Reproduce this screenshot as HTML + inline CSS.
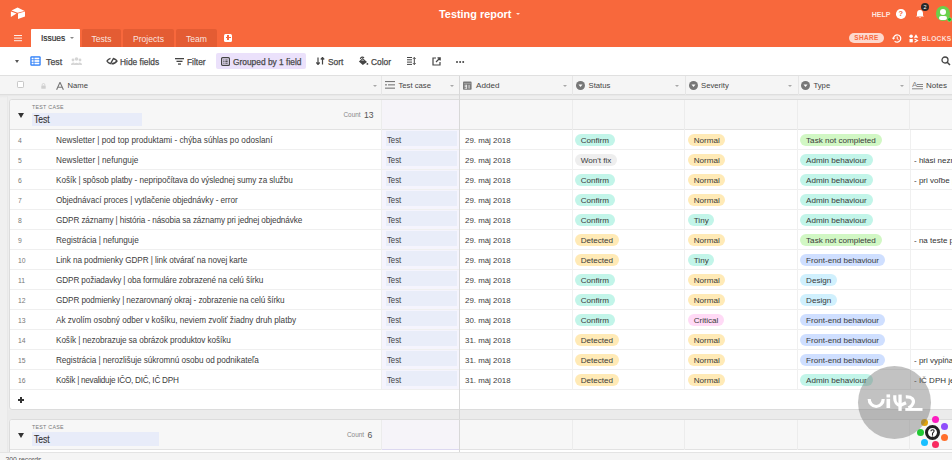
<!DOCTYPE html>
<html><head><meta charset="utf-8">
<style>
*{box-sizing:border-box;margin:0;padding:0}
html,body{width:952px;height:460px;overflow:hidden}
body{position:relative;background:#f0f0f0;font-family:"Liberation Sans",sans-serif;color:#333}
.a{position:absolute;white-space:nowrap}
#hdr{position:absolute;left:0;top:0;width:952px;height:47px;background:#f8683c}
.tab{position:absolute;top:29px;height:18px;padding-top:.5px;background:#e45c33;border-radius:2px 2px 0 0;color:rgba(255,255,255,.85);font-size:8.6px;line-height:18px;text-align:center}
#tb{position:absolute;left:0;top:47px;width:952px;height:29px;background:#fff;border-bottom:1px solid #e0e0e0}
.tt{position:absolute;top:1px;line-height:28px;font-size:8.4px;color:#4a4a4a;-webkit-text-stroke:.25px #4a4a4a}
#ch{position:absolute;left:0;top:76px;width:952px;height:19px;background:#f5f5f5;border-bottom:1px solid #dedede}
.hc{position:absolute;top:0;height:18px;line-height:20px;font-size:7.7px;color:#444}
.vd{position:absolute;width:1px;background:#e6e6e6}
.card{position:absolute;left:9px;width:960px;background:#fff;border:1px solid #dcdcdc;border-radius:3px}
.row{position:absolute;left:0;width:943px;height:20px;border-bottom:1px solid #efefef}
.num{position:absolute;white-space:nowrap;left:8px;top:1px;line-height:19px;font-size:6.8px;color:#777}
.nm{position:absolute;white-space:nowrap;left:46px;top:1px;line-height:19px;font-size:8.2px;color:#404040}
.tc{position:absolute;left:372px;top:0;width:78px;height:19px;background:#f5f4fd}
.tcp{position:absolute;left:3.8px;top:1px;width:71.2px;height:15px;background:#e9edf9}.tcp span{position:absolute;left:1.6px;top:0;font-size:9px;line-height:19.2px;color:#444;transform:scaleX(.86);transform-origin:0 0}
.dt{position:absolute;white-space:nowrap;left:455px;top:1px;line-height:19px;font-size:7.9px;color:#404040}
.pill{position:absolute;white-space:nowrap;top:3.8px;height:12px;line-height:13px;border-radius:6px;font-size:8.1px;padding:0 5.7px;color:#3a3a3a}
.nt{position:absolute;left:904px;top:1px;width:60px;overflow:hidden;white-space:nowrap;line-height:19px;font-size:8px;color:#333}
</style></head><body>

<!-- header -->
<div id="hdr">
  <svg class="a" style="left:10px;top:7px" width="16" height="13" viewBox="0 0 16 13">
    <path d="M1.5 3.6 L7.6 0.6 L14.6 4 L7.6 5.8 Z" fill="#fff"/>
    <path d="M0.9 4.6 L0.9 9.9 L6.5 6.5 Z" fill="#fff"/>
    <path d="M8 6.4 L15 4.5 L15 9.5 L8 12.1 Z" fill="#fff"/>
  </svg>
  <div class="a" style="left:439px;top:0;line-height:28px;font-size:10.9px;font-weight:bold;color:#fff">Testing report</div>
  <div class="a" style="left:516px;top:12.5px;width:0;height:0;border-left:2px solid transparent;border-right:2px solid transparent;border-top:2px solid rgba(255,255,255,.8)"></div>
  <div class="a" style="left:871.8px;top:.6px;line-height:28px;font-size:7px;font-weight:bold;letter-spacing:0;color:rgba(255,255,255,.85)">HELP</div>
  <div class="a" style="left:896px;top:9px;width:9.5px;height:9.5px;border-radius:50%;background:#fff;color:#f8683c;font-size:7.5px;font-weight:bold;line-height:9.5px;text-align:center">?</div>
  <svg class="a" style="left:915.4px;top:8.6px" width="10" height="10" viewBox="0 0 10 10"><path d="M5 1 C2.8 1 2 2.6 2 4.5 L2 6.5 L1 7.6 L9 7.6 L8 6.5 L8 4.5 C8 2.6 7.2 1 5 1Z M4 8.3 L6 8.3 L5 9.3Z" fill="#fff"/></svg>
  <div class="a" style="left:921.1px;top:3.2px;width:8px;height:8px;border-radius:50%;background:#2a2a2a;color:#fff;font-size:5.5px;line-height:8px;text-align:center">2</div>
  <div class="a" style="left:935.6px;top:5.9px;width:14.9px;height:14.9px;border-radius:50%;background:#6cd14b;overflow:hidden">
    <div class="a" style="left:4.4px;top:2.7px;width:6px;height:6px;border-radius:50%;background:#fff"></div>
    <div class="a" style="left:3.2px;top:10.2px;width:8px;height:3.6px;border-radius:2px;background:#fff"></div>
  </div>
  <div class="a" style="left:946.6px;top:16.8px;width:5px;height:5px;border-radius:50%;background:#14b825;border:.8px solid #7ad860"></div>

  <div class="a" style="left:14px;top:34.8px;width:7.8px;height:1.3px;background:#fff;box-shadow:0 2.6px 0 #fff,0 5.2px 0 #fff;opacity:.9"></div>
  <div class="a" style="left:30.6px;top:28.8px;width:49.4px;height:18.2px;background:#fff;border-radius:1px 1px 0 0"></div>
  <div class="a" style="left:41px;top:29px;line-height:18px;font-size:8.4px;color:#333;-webkit-text-stroke:.2px #333">Issues</div>
  <div class="a" style="left:70px;top:37px;width:0;height:0;border-left:2px solid transparent;border-right:2px solid transparent;border-top:2.5px solid #888"></div>
  <div class="tab" style="left:82px;width:39px">Tests</div>
  <div class="tab" style="left:123px;width:51px">Projects</div>
  <div class="tab" style="left:176px;width:41px">Team</div>
  <div class="a" style="left:224px;top:33.6px;width:8px;height:8px;border-radius:1.5px;background:#fff"></div>
  <div class="a" style="left:227.3px;top:35.1px;width:1.5px;height:5px;background:#f8683c"></div>
  <div class="a" style="left:225.5px;top:36.85px;width:5px;height:1.5px;background:#f8683c"></div>

  <div class="a" style="left:849px;top:33px;width:35px;height:10px;border-radius:5px;background:rgba(255,255,255,.75);color:#f8683c;font-size:6.4px;font-weight:bold;line-height:10px;text-align:center;letter-spacing:.4px">SHARE</div>
  <svg class="a" style="left:891px;top:34px" width="11" height="9" viewBox="0 0 11 9"><path d="M2.5 4.5 A3.6 3.6 0 1 1 3.6 7.1" fill="none" stroke="#fff" stroke-width="1.2"/><path d="M0.8 3.8 L4.2 3.8 L2.5 5.8Z" fill="#fff"/><path d="M6.2 2.6 L6.2 4.8 L7.6 5.8" fill="none" stroke="#fff" stroke-width="1"/></svg>
  <svg class="a" style="left:909px;top:34px" width="10" height="9" viewBox="0 0 10 9"><circle cx="2.15" cy="2.15" r="1.75" fill="#fff"/><path d="M7 0.3 L9.2 3.8 L4.8 3.8Z" fill="#fff"/><rect x="0.5" y="5" width="3.3" height="3.3" fill="#fff"/><path d="M5.5 5 L8.5 6.6 L5.5 8.3" fill="none" stroke="#fff" stroke-width="1.1"/></svg>
  <div class="a" style="left:921.8px;top:29px;line-height:19px;font-size:6.6px;font-weight:bold;letter-spacing:.3px;color:rgba(255,255,255,.82)">BLOCKS</div>
</div>

<!-- toolbar -->
<div id="tb">
  <div class="a" style="left:15.4px;top:12.6px;width:0;height:0;border-left:2.8px solid transparent;border-right:2.8px solid transparent;border-top:3.5px solid #555"></div>
  <svg class="a" style="left:30px;top:9px" width="11" height="10" viewBox="0 0 11 10"><rect x="0.3" y="0.3" width="10.4" height="9.4" rx="1.2" fill="#2d7ff9"/><g fill="#fff"><rect x="1.6" y="1.6" width="2" height="1.8"/><rect x="4.4" y="1.6" width="5" height="1.8"/><rect x="1.6" y="4.1" width="2" height="1.8"/><rect x="4.4" y="4.1" width="5" height="1.8"/><rect x="1.6" y="6.6" width="2" height="1.8"/><rect x="4.4" y="6.6" width="5" height="1.8"/></g></svg>
  <div class="tt" style="left:46px;font-size:8.8px;color:#4a4a4a">Test</div>
  <svg class="a" style="left:71px;top:10px" width="11" height="8" viewBox="0 0 11 8"><g fill="#d5d5d5"><circle cx="5.5" cy="2" r="1.8"/><circle cx="2" cy="3" r="1.4"/><circle cx="9" cy="3" r="1.4"/><path d="M2.6 8 C2.6 5 8.4 5 8.4 8Z"/><path d="M0 8 C0 5.5 3 5 3.5 6 L2.6 8Z"/><path d="M11 8 C11 5.5 8 5 7.5 6 L8.4 8Z"/></g></svg>

  <svg class="a" style="left:106px;top:10px" width="12" height="8" viewBox="0 0 12 8"><g fill="none" stroke="#444" stroke-width="1.4"><path d="M4.5 1.3 C2.8 1.8 1.5 3 1 4 C1.5 5 2.5 6 4 6.5"/><path d="M7.3 1.5 C9 2 10.5 3 11 4 C10 5.5 8 6.8 5.5 6.8"/><path d="M7.7 1 L4.3 7.2"/></g></svg>
  <div class="tt" style="left:120px">Hide fields</div>
  <svg class="a" style="left:175px;top:11px" width="9" height="7" viewBox="0 0 9 7"><rect x="0" y="0" width="9" height="1.3" fill="#444"/><rect x="1.5" y="2.7" width="6" height="1.3" fill="#444"/><rect x="3" y="5.4" width="3" height="1.3" fill="#444"/></svg>
  <div class="tt" style="left:187px">Filter</div>
  <div class="a" style="left:215.5px;top:6px;width:90px;height:16px;border-radius:2px;background:#ebe1fb"></div>
  <svg class="a" style="left:221px;top:9.5px" width="9" height="9" viewBox="0 0 9 9"><rect x="0.6" y="0.6" width="7.8" height="7.8" rx="1" fill="none" stroke="#444" stroke-width="1.2"/><rect x="2.3" y="2.5" width="1.2" height="1" fill="#444"/><rect x="4.3" y="2.5" width="2.4" height="1" fill="#444"/><rect x="2.3" y="4.1" width="1.2" height="1" fill="#444"/><rect x="4.3" y="4.1" width="2.4" height="1" fill="#444"/><rect x="2.3" y="5.7" width="1.2" height="1" fill="#444"/><rect x="4.3" y="5.7" width="2.4" height="1" fill="#444"/></svg>
  <div class="tt" style="left:233px">Grouped by 1 field</div>
  <svg class="a" style="left:316px;top:10px" width="9" height="8" viewBox="0 0 9 8"><path d="M2 0.5 L2 7.5 M0.3 5.5 L2 7.5 L3.7 5.5" fill="none" stroke="#444" stroke-width="1.2"/><path d="M6.5 7.5 L6.5 0.5 M4.8 2.5 L6.5 0.5 L8.2 2.5" fill="none" stroke="#444" stroke-width="1.2"/></svg>
  <div class="tt" style="left:328px">Sort</div>
  <svg class="a" style="left:358px;top:9px" width="11" height="10" viewBox="0 0 11 10"><path d="M2.3 2.8 C2.8 0.8 5 0.6 6 2" fill="none" stroke="#444" stroke-width="1.1"/><path d="M4.6 2.1 L9 5.9 L4.8 9 L0.9 5.4 Z" fill="#444"/><path d="M3 4.4 L4.6 3.4 L6.4 4.5 Z" fill="#eee"/><circle cx="9.4" cy="7.9" r=".9" fill="#444"/></svg>
  <div class="tt" style="left:371px">Color</div>
  <svg class="a" style="left:407px;top:10px" width="9" height="8" viewBox="0 0 9 8"><g fill="#444"><rect x="0" y="0" width="5" height="1"/><rect x="0" y="2.3" width="5" height="1"/><rect x="0" y="4.6" width="5" height="1"/><rect x="0" y="6.9" width="5" height="1"/></g><path d="M7.3 0.5 L7.3 7.5 M6 1.8 L7.3 0.5 L8.6 1.8 M6 6.2 L7.3 7.5 L8.6 6.2" fill="none" stroke="#444" stroke-width="1"/></svg>
  <svg class="a" style="left:431.5px;top:10px" width="9" height="9" viewBox="0 0 9 9"><path d="M4 1 L1 1 L1 8 L8 8 L8 5" fill="none" stroke="#444" stroke-width="1.2"/><path d="M4 5 L8 1 M5.5 0.8 L8.2 0.8 L8.2 3.5" fill="none" stroke="#444" stroke-width="1.2"/></svg>
  <div class="a" style="left:455.6px;top:14px;width:2px;height:2px;background:#444;border-radius:50%;box-shadow:3.1px 0 0 #444,6.2px 0 0 #444"></div>
  <svg class="a" style="left:941px;top:9px" width="10" height="10" viewBox="0 0 10 10"><circle cx="4" cy="4" r="3" fill="none" stroke="#444" stroke-width="1.3"/><path d="M6.2 6.2 L9 9" stroke="#444" stroke-width="1.5"/></svg>
</div>

<!-- column headers -->
<div id="ch">
  <div class="a" style="left:16.8px;top:5.3px;width:7.1px;height:6.9px;border:1px solid #c8c8c8;border-radius:1.2px;background:#fff"></div>
  <svg class="a" style="left:40.5px;top:7.4px" width="5" height="6" viewBox="0 0 5 6"><path d="M1.2 2.6 L1.2 1.8 A1.3 1.3 0 0 1 3.8 1.8 L3.8 2.6" fill="none" stroke="#cfcfcf" stroke-width=".8"/><rect x="0.3" y="2.5" width="4.4" height="3.2" rx=".5" fill="#cfcfcf"/></svg>
  <svg class="a" style="left:56px;top:5.6px" width="8" height="8" viewBox="0 0 8 8"><path d="M0.6 7.8 L4 0.3 L7.4 7.8 M1.9 5.2 L6.1 5.2" fill="none" stroke="#777" stroke-width="1.1"/></svg>
  <div class="hc" style="left:67.5px">Name</div>
  <div class="a" style="left:373px;top:8.6px;border-left:2px solid transparent;border-right:2px solid transparent;border-top:2.6px solid #a8a8a8"></div>
  <div class="vd" style="left:381px;top:0;height:19px"></div>
  <svg class="a" style="left:385px;top:5.3px" width="10" height="8" viewBox="0 0 10 8"><g fill="#777"><rect x="0" y="0" width="10" height="1.1"/><rect x="3" y="3.3" width="7" height="1.1"/><rect x="0" y="6.6" width="10" height="1.1"/><rect x="0" y="3.3" width="2" height="1.1"/></g></svg>
  <div class="hc" style="left:398.5px">Test case</div>
  <div class="a" style="left:450px;top:8.6px;border-left:2px solid transparent;border-right:2px solid transparent;border-top:2.6px solid #a8a8a8"></div>
  <div class="vd" style="left:459px;top:0;height:19px;background:#d8d8d8"></div>
  <svg class="a" style="left:463.4px;top:4.6px" width="9" height="9" viewBox="0 0 9 9"><rect x="0" y="0.6" width="8.6" height="8.2" rx=".8" fill="#7a7a7a"/><rect x="0.9" y="2.2" width="6.8" height=".7" fill="#aaa"/><g fill="#f0f0f0"><rect x="1.6" y="3.8" width="2.4" height=".8"/><rect x="1.6" y="5.3" width="2.4" height=".8"/><rect x="1.6" y="6.8" width="2.4" height=".8"/><rect x="3.3" y="3.8" width=".8" height="3.8"/><rect x="5.6" y="3.8" width=".9" height="3.8"/></g></svg>
  <div class="hc" style="left:476px;font-size:8.1px">Added</div>
  <div class="a" style="left:562.5px;top:8.6px;border-left:2px solid transparent;border-right:2px solid transparent;border-top:2.6px solid #a8a8a8"></div>
  <div class="vd" style="left:572px;top:0;height:19px"></div>
  <svg class="a" style="left:575.5px;top:4.7px" width="9" height="9" viewBox="0 0 9 9"><circle cx="4.5" cy="4.5" r="4.5" fill="#777"/><path d="M2.5 3.5 L6.5 3.5 L4.5 6Z" fill="#fff"/></svg>
  <div class="hc" style="left:588.5px">Status</div>
  <div class="a" style="left:675px;top:8.6px;border-left:2px solid transparent;border-right:2px solid transparent;border-top:2.6px solid #a8a8a8"></div>
  <div class="vd" style="left:685px;top:0;height:19px"></div>
  <svg class="a" style="left:688.5px;top:4.7px" width="9" height="9" viewBox="0 0 9 9"><circle cx="4.5" cy="4.5" r="4.5" fill="#777"/><path d="M2.5 3.5 L6.5 3.5 L4.5 6Z" fill="#fff"/></svg>
  <div class="hc" style="left:701px">Severity</div>
  <div class="a" style="left:787.5px;top:8.6px;border-left:2px solid transparent;border-right:2px solid transparent;border-top:2.6px solid #a8a8a8"></div>
  <div class="vd" style="left:797.5px;top:0;height:19px"></div>
  <svg class="a" style="left:801px;top:4.7px" width="9" height="9" viewBox="0 0 9 9"><circle cx="4.5" cy="4.5" r="4.5" fill="#777"/><path d="M2.5 3.5 L6.5 3.5 L4.5 6Z" fill="#fff"/></svg>
  <div class="hc" style="left:813.5px">Type</div>
  <div class="a" style="left:900px;top:8.6px;border-left:2px solid transparent;border-right:2px solid transparent;border-top:2.6px solid #a8a8a8"></div>
  <div class="vd" style="left:909px;top:0;height:19px"></div>
  <svg class="a" style="left:912px;top:4.2px" width="11" height="10" viewBox="0 0 11 10"><text x="0" y="7" font-size="8" font-family="Liberation Sans" fill="#888">A</text><g fill="#888"><rect x="5" y="4" width="6" height="1"/><rect x="5" y="6" width="6" height="1"/><rect x="0" y="8.3" width="11" height="1"/></g></svg>
  <div class="hc" style="left:926px;font-size:8px">Notes</div>
</div>

<div class="a" style="left:0;top:95px;width:952px;height:3px;background:linear-gradient(#e6e6e6,#f0f0f0)"></div>
<div class="a" style="left:7px;top:96px;width:945px;height:364px;border-left:1px solid #e9e9e9;background:#eeeeee"></div>
<div class="a" style="left:8px;top:410px;width:944px;height:10px;background:#ebebeb"></div>
<div class="card" style="top:99px;height:311px;overflow:hidden">
<div class="a" style="left:0;top:0;width:960px;height:30px;background:#f7f7f7;border-bottom:1px solid #e2e2e2"></div>
<div class="vd" style="left:371px;top:0;height:30px;background:#ececec"></div>
<div class="vd" style="left:562px;top:0;height:30px;background:#ececec"></div>
<div class="vd" style="left:674px;top:0;height:30px;background:#ececec"></div>
<div class="vd" style="left:787px;top:0;height:30px;background:#ececec"></div>
<div class="vd" style="left:899px;top:0;height:30px;background:#ececec"></div>
<div class="a" style="left:372px;top:0;width:78px;height:29px;background:#f6f4f9"></div>
<div class="a" style="left:21.9px;top:3.5px;font-size:5.3px;letter-spacing:.3px;color:#777;line-height:6px">TEST CASE</div>
<div class="a" style="left:7.7px;top:13.3px;border-left:3.1px solid transparent;border-right:3.1px solid transparent;border-top:5px solid #333"></div>
<div class="a" style="left:21.7px;top:12.6px;width:110.6px;height:13.3px;background:#e8ecf9"></div>
<div class="a" style="left:24.4px;top:12.6px;line-height:14px;font-size:10.3px;color:#333;-webkit-text-stroke:.15px #333;transform:scaleX(.83);transform-origin:0 0">Test</div>
<div class="a" style="left:333.5px;top:10px;line-height:10px;font-size:6.4px;color:#888">Count</div>
<div class="a" style="left:354px;top:10.4px;line-height:10px;font-size:8.6px;color:#555">13</div>
<div class="row" style="top:30px">
<div class="num">4</div>
<div class="nm" style="letter-spacing:0.023px">Newsletter | pod top produktami - chýba súhlas po odoslaní</div>
<div class="vd" style="left:371px;top:0;height:20px;background:#eee"></div>
<div class="tc"><div class="tcp"><span>Test</span></div></div>
<div class="dt">29. máj 2018</div>
<div class="vd" style="left:562px;top:0;height:20px;background:#f0f0f0"></div>
<div class="pill" style="left:565px;background:#c2f5e9">Confirm</div>
<div class="vd" style="left:674px;top:0;height:20px;background:#f0f0f0"></div>
<div class="pill" style="left:678px;background:#ffeab6">Normal</div>
<div class="vd" style="left:787px;top:0;height:20px;background:#f0f0f0"></div>
<div class="pill" style="left:790.4px;background:#d1f7c4">Task not completed</div>
<div class="vd" style="left:899.5px;top:0;height:20px;background:#f0f0f0"></div>
</div>
<div class="row" style="top:50px">
<div class="num">5</div>
<div class="nm" style="letter-spacing:0.048px">Newsletter | nefunguje</div>
<div class="vd" style="left:371px;top:0;height:20px;background:#eee"></div>
<div class="tc"><div class="tcp"><span>Test</span></div></div>
<div class="dt">29. máj 2018</div>
<div class="vd" style="left:562px;top:0;height:20px;background:#f0f0f0"></div>
<div class="pill" style="left:565px;background:#eeeeee">Won't fix</div>
<div class="vd" style="left:674px;top:0;height:20px;background:#f0f0f0"></div>
<div class="pill" style="left:678px;background:#ffeab6">Normal</div>
<div class="vd" style="left:787px;top:0;height:20px;background:#f0f0f0"></div>
<div class="pill" style="left:790.4px;background:#c2f5e9">Admin behaviour</div>
<div class="vd" style="left:899.5px;top:0;height:20px;background:#f0f0f0"></div>
<div class="nt">- hlási neznámu chybu</div>
</div>
<div class="row" style="top:70px">
<div class="num">6</div>
<div class="nm" style="letter-spacing:-0.061px">Košík | spôsob platby - nepripočítava do výslednej sumy za službu</div>
<div class="vd" style="left:371px;top:0;height:20px;background:#eee"></div>
<div class="tc"><div class="tcp"><span>Test</span></div></div>
<div class="dt">29. máj 2018</div>
<div class="vd" style="left:562px;top:0;height:20px;background:#f0f0f0"></div>
<div class="pill" style="left:565px;background:#c2f5e9">Confirm</div>
<div class="vd" style="left:674px;top:0;height:20px;background:#f0f0f0"></div>
<div class="pill" style="left:678px;background:#ffeab6">Normal</div>
<div class="vd" style="left:787px;top:0;height:20px;background:#f0f0f0"></div>
<div class="pill" style="left:790.4px;background:#c2f5e9">Admin behaviour</div>
<div class="vd" style="left:899.5px;top:0;height:20px;background:#f0f0f0"></div>
<div class="nt">- pri voľbe platby</div>
</div>
<div class="row" style="top:90px">
<div class="num">7</div>
<div class="nm" style="letter-spacing:-0.051px">Objednávací proces | vytlačenie objednávky - error</div>
<div class="vd" style="left:371px;top:0;height:20px;background:#eee"></div>
<div class="tc"><div class="tcp"><span>Test</span></div></div>
<div class="dt">29. máj 2018</div>
<div class="vd" style="left:562px;top:0;height:20px;background:#f0f0f0"></div>
<div class="pill" style="left:565px;background:#c2f5e9">Confirm</div>
<div class="vd" style="left:674px;top:0;height:20px;background:#f0f0f0"></div>
<div class="pill" style="left:678px;background:#ffeab6">Normal</div>
<div class="vd" style="left:787px;top:0;height:20px;background:#f0f0f0"></div>
<div class="pill" style="left:790.4px;background:#c2f5e9">Admin behaviour</div>
<div class="vd" style="left:899.5px;top:0;height:20px;background:#f0f0f0"></div>
</div>
<div class="row" style="top:110px">
<div class="num">8</div>
<div class="nm" style="letter-spacing:-0.109px">GDPR záznamy | história - násobia sa záznamy pri jednej objednávke</div>
<div class="vd" style="left:371px;top:0;height:20px;background:#eee"></div>
<div class="tc"><div class="tcp"><span>Test</span></div></div>
<div class="dt">29. máj 2018</div>
<div class="vd" style="left:562px;top:0;height:20px;background:#f0f0f0"></div>
<div class="pill" style="left:565px;background:#c2f5e9">Confirm</div>
<div class="vd" style="left:674px;top:0;height:20px;background:#f0f0f0"></div>
<div class="pill" style="left:678px;background:#c2f5e9">Tiny</div>
<div class="vd" style="left:787px;top:0;height:20px;background:#f0f0f0"></div>
<div class="pill" style="left:790.4px;background:#c2f5e9">Admin behaviour</div>
<div class="vd" style="left:899.5px;top:0;height:20px;background:#f0f0f0"></div>
</div>
<div class="row" style="top:130px">
<div class="num">9</div>
<div class="nm" style="letter-spacing:-0.041px">Registrácia | nefunguje</div>
<div class="vd" style="left:371px;top:0;height:20px;background:#eee"></div>
<div class="tc"><div class="tcp"><span>Test</span></div></div>
<div class="dt">29. máj 2018</div>
<div class="vd" style="left:562px;top:0;height:20px;background:#f0f0f0"></div>
<div class="pill" style="left:565px;background:#ffeab6">Detected</div>
<div class="vd" style="left:674px;top:0;height:20px;background:#f0f0f0"></div>
<div class="pill" style="left:678px;background:#ffeab6">Normal</div>
<div class="vd" style="left:787px;top:0;height:20px;background:#f0f0f0"></div>
<div class="pill" style="left:790.4px;background:#d1f7c4">Task not completed</div>
<div class="vd" style="left:899.5px;top:0;height:20px;background:#f0f0f0"></div>
<div class="nt">- na teste pri</div>
</div>
<div class="row" style="top:150px">
<div class="num">10</div>
<div class="nm" style="letter-spacing:-0.073px">Link na podmienky GDPR | link otvárať na novej karte</div>
<div class="vd" style="left:371px;top:0;height:20px;background:#eee"></div>
<div class="tc"><div class="tcp"><span>Test</span></div></div>
<div class="dt">29. máj 2018</div>
<div class="vd" style="left:562px;top:0;height:20px;background:#f0f0f0"></div>
<div class="pill" style="left:565px;background:#ffeab6">Detected</div>
<div class="vd" style="left:674px;top:0;height:20px;background:#f0f0f0"></div>
<div class="pill" style="left:678px;background:#c2f5e9">Tiny</div>
<div class="vd" style="left:787px;top:0;height:20px;background:#f0f0f0"></div>
<div class="pill" style="left:790.4px;background:#cfdfff">Front-end behaviour</div>
<div class="vd" style="left:899.5px;top:0;height:20px;background:#f0f0f0"></div>
</div>
<div class="row" style="top:170px">
<div class="num">11</div>
<div class="nm" style="letter-spacing:-0.113px">GDPR požiadavky | oba formuláre zobrazené na celú šírku</div>
<div class="vd" style="left:371px;top:0;height:20px;background:#eee"></div>
<div class="tc"><div class="tcp"><span>Test</span></div></div>
<div class="dt">29. máj 2018</div>
<div class="vd" style="left:562px;top:0;height:20px;background:#f0f0f0"></div>
<div class="pill" style="left:565px;background:#c2f5e9">Confirm</div>
<div class="vd" style="left:674px;top:0;height:20px;background:#f0f0f0"></div>
<div class="pill" style="left:678px;background:#ffeab6">Normal</div>
<div class="vd" style="left:787px;top:0;height:20px;background:#f0f0f0"></div>
<div class="pill" style="left:790.4px;background:#d0f0fd">Design</div>
<div class="vd" style="left:899.5px;top:0;height:20px;background:#f0f0f0"></div>
</div>
<div class="row" style="top:190px">
<div class="num">12</div>
<div class="nm" style="letter-spacing:-0.108px">GDPR podmienky | nezarovnaný okraj - zobrazenie na celú šírku</div>
<div class="vd" style="left:371px;top:0;height:20px;background:#eee"></div>
<div class="tc"><div class="tcp"><span>Test</span></div></div>
<div class="dt">29. máj 2018</div>
<div class="vd" style="left:562px;top:0;height:20px;background:#f0f0f0"></div>
<div class="pill" style="left:565px;background:#c2f5e9">Confirm</div>
<div class="vd" style="left:674px;top:0;height:20px;background:#f0f0f0"></div>
<div class="pill" style="left:678px;background:#ffeab6">Normal</div>
<div class="vd" style="left:787px;top:0;height:20px;background:#f0f0f0"></div>
<div class="pill" style="left:790.4px;background:#d0f0fd">Design</div>
<div class="vd" style="left:899.5px;top:0;height:20px;background:#f0f0f0"></div>
</div>
<div class="row" style="top:210px">
<div class="num">13</div>
<div class="nm" style="letter-spacing:-0.016px">Ak zvolím osobný odber v košíku, neviem zvoliť žiadny druh platby</div>
<div class="vd" style="left:371px;top:0;height:20px;background:#eee"></div>
<div class="tc"><div class="tcp"><span>Test</span></div></div>
<div class="dt">30. máj 2018</div>
<div class="vd" style="left:562px;top:0;height:20px;background:#f0f0f0"></div>
<div class="pill" style="left:565px;background:#c2f5e9">Confirm</div>
<div class="vd" style="left:674px;top:0;height:20px;background:#f0f0f0"></div>
<div class="pill" style="left:678px;background:#ffdaf6">Critical</div>
<div class="vd" style="left:787px;top:0;height:20px;background:#f0f0f0"></div>
<div class="pill" style="left:790.4px;background:#cfdfff">Front-end behaviour</div>
<div class="vd" style="left:899.5px;top:0;height:20px;background:#f0f0f0"></div>
</div>
<div class="row" style="top:230px">
<div class="num">14</div>
<div class="nm" style="letter-spacing:-0.074px">Košík | nezobrazuje sa obrázok produktov košíku</div>
<div class="vd" style="left:371px;top:0;height:20px;background:#eee"></div>
<div class="tc"><div class="tcp"><span>Test</span></div></div>
<div class="dt">31. máj 2018</div>
<div class="vd" style="left:562px;top:0;height:20px;background:#f0f0f0"></div>
<div class="pill" style="left:565px;background:#ffeab6">Detected</div>
<div class="vd" style="left:674px;top:0;height:20px;background:#f0f0f0"></div>
<div class="pill" style="left:678px;background:#ffeab6">Normal</div>
<div class="vd" style="left:787px;top:0;height:20px;background:#f0f0f0"></div>
<div class="pill" style="left:790.4px;background:#cfdfff">Front-end behaviour</div>
<div class="vd" style="left:899.5px;top:0;height:20px;background:#f0f0f0"></div>
</div>
<div class="row" style="top:250px">
<div class="num">15</div>
<div class="nm" style="letter-spacing:-0.054px">Registrácia | nerozlišuje súkromnú osobu od podnikateľa</div>
<div class="vd" style="left:371px;top:0;height:20px;background:#eee"></div>
<div class="tc"><div class="tcp"><span>Test</span></div></div>
<div class="dt">31. máj 2018</div>
<div class="vd" style="left:562px;top:0;height:20px;background:#f0f0f0"></div>
<div class="pill" style="left:565px;background:#ffeab6">Detected</div>
<div class="vd" style="left:674px;top:0;height:20px;background:#f0f0f0"></div>
<div class="pill" style="left:678px;background:#ffeab6">Normal</div>
<div class="vd" style="left:787px;top:0;height:20px;background:#f0f0f0"></div>
<div class="pill" style="left:790.4px;background:#cfdfff">Front-end behaviour</div>
<div class="vd" style="left:899.5px;top:0;height:20px;background:#f0f0f0"></div>
<div class="nt">- pri vypĺňaní</div>
</div>
<div class="row" style="top:270px">
<div class="num">16</div>
<div class="nm" style="letter-spacing:-0.265px">Košík | nevaliduje IČO, DIČ, IČ DPH</div>
<div class="vd" style="left:371px;top:0;height:20px;background:#eee"></div>
<div class="tc"><div class="tcp"><span>Test</span></div></div>
<div class="dt">31. máj 2018</div>
<div class="vd" style="left:562px;top:0;height:20px;background:#f0f0f0"></div>
<div class="pill" style="left:565px;background:#ffeab6">Detected</div>
<div class="vd" style="left:674px;top:0;height:20px;background:#f0f0f0"></div>
<div class="pill" style="left:678px;background:#ffeab6">Normal</div>
<div class="vd" style="left:787px;top:0;height:20px;background:#f0f0f0"></div>
<div class="pill" style="left:790.4px;background:#c2f5e9">Admin behaviour</div>
<div class="vd" style="left:899.5px;top:0;height:20px;background:#f0f0f0"></div>
<div class="nt">- IČ DPH je</div>
</div>
<div class="a" style="left:8px;top:299.1px;width:5.6px;height:1.5px;background:#333"></div><div class="a" style="left:10.05px;top:297.1px;width:1.5px;height:5.6px;background:#333"></div>
</div>
<div class="a" style="left:459px;top:94px;width:1px;height:366px;background:#d8d8d8"></div>
<div class="card" style="top:419px;height:60px;overflow:hidden">
<div class="a" style="left:0;top:0;width:960px;height:30px;background:#f7f7f7;border-bottom:1px solid #e2e2e2"></div>
<div class="vd" style="left:371px;top:0;height:30px;background:#ececec"></div>
<div class="vd" style="left:562px;top:0;height:30px;background:#ececec"></div>
<div class="vd" style="left:674px;top:0;height:30px;background:#ececec"></div>
<div class="vd" style="left:787px;top:0;height:30px;background:#ececec"></div>
<div class="vd" style="left:899px;top:0;height:30px;background:#ececec"></div>
<div class="a" style="left:372px;top:0;width:78px;height:30px;background:#f6f4f9;border-bottom:1px solid #dcd8f0"></div>
<div class="a" style="left:21.9px;top:3.5px;font-size:5.3px;letter-spacing:.3px;color:#777;line-height:6px">TEST CASE</div>
<div class="a" style="left:7.7px;top:13.3px;border-left:3.1px solid transparent;border-right:3.1px solid transparent;border-top:5px solid #333"></div>
<div class="a" style="left:21.7px;top:12.4px;width:127.7px;height:13.4px;background:#e8ecf9"></div>
<div class="a" style="left:24.4px;top:12.6px;line-height:14px;font-size:10.3px;color:#333;-webkit-text-stroke:.15px #333;transform:scaleX(.83);transform-origin:0 0">Test</div>
<div class="a" style="left:337px;top:10px;line-height:10px;font-size:6.4px;color:#888">Count</div>
<div class="a" style="left:357.5px;top:10.4px;line-height:10px;font-size:8.6px;color:#555">6</div>
</div>
<div class="a" style="left:459px;top:420px;width:1px;height:40px;background:#d8d8d8"></div>
<div class="a" style="left:0;top:452px;width:952px;height:8px;background:#f5f5f5;border-top:1px solid #e4e4e4"></div>
<div class="a" style="left:5.5px;top:455px;line-height:10px;font-size:6.8px;color:#555">200 records</div>
<div class="a" style="left:921.4px;top:418.8px;width:7px;height:7px;border-radius:50%;background:#e0a30a"></div>
<div class="a" style="left:931.8px;top:416.3px;width:7px;height:7px;border-radius:50%;background:#fc1cc0"></div>
<div class="a" style="left:940.5px;top:423.1px;width:7px;height:7px;border-radius:50%;background:#8f4dfb"></div>
<div class="a" style="left:940.5px;top:433.9px;width:7px;height:7px;border-radius:50%;background:#ff6f2c"></div>
<div class="a" style="left:931.8px;top:440.8px;width:7px;height:7px;border-radius:50%;background:#f82b60"></div>
<div class="a" style="left:921.4px;top:438.5px;width:7px;height:7px;border-radius:50%;background:#18bfff"></div>
<div class="a" style="left:916.5px;top:428.7px;width:7px;height:7px;border-radius:50%;background:#20c933"></div>
<div class="a" style="left:924.7px;top:424.5px;width:15.4px;height:15.4px;border-radius:50%;background:#fff;border:3.3px solid #222"></div>
<svg class="a" style="left:928px;top:428px" width="9" height="9" viewBox="0 0 9 9"><path d="M2.9 3.2 C2.9 1.2 6.1 1.2 6.1 3.1 C6.1 4.3 4.5 4.4 4.5 5.6 L4.5 7" fill="none" stroke="#222" stroke-width="1.1"/><circle cx="4.5" cy="7.9" r=".7" fill="#222"/></svg>
<div class="a" style="left:858.2px;top:366.4px;width:73px;height:73px;border-radius:50%;background:rgba(110,110,110,.42)"></div>
<svg class="a" style="left:860px;top:390px" width="70" height="26" viewBox="0 0 70 26"><g fill="none" stroke="#fff" stroke-width="3.2"><path d="M9.2 8.9 A7 7.6 0 0 0 23.2 8.9"/><path d="M34.8 5.3 L34.8 8.5 C34.8 12 37 15 40 15.5 L46 12.8"/><path d="M45.8 6.8 C52 6.5 54.5 9.5 53 13.5 C52.3 15.5 50.5 17 48.5 18"/></g><g fill="#fff"><rect x="26.5" y="8.8" width="3.6" height="9.2"/><rect x="26.5" y="4.4" width="3.6" height="3.1"/><rect x="38.4" y="4.6" width="3.3" height="16.3"/><rect x="45.3" y="18" width="17.2" height="2.9"/></g></svg>
</body></html>
